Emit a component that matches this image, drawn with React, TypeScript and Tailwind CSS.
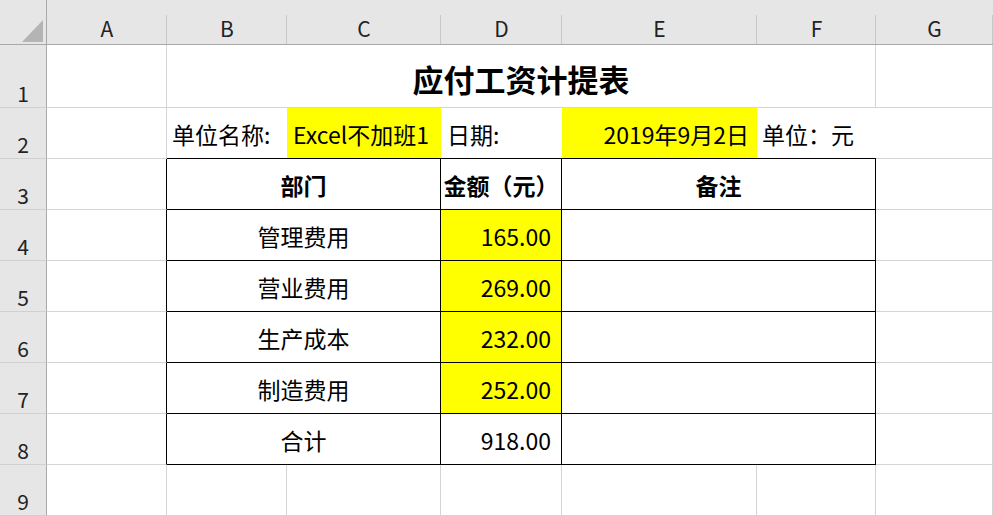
import React from "react"

const font = { fontFamily: '"Noto Sans CJK SC", "Noto Sans", sans-serif' }

const cols = ["A", "B", "C", "D", "E", "F", "G"]

const rows = [
  { dept: "管理费用", amount: "165.00", hl: true },
  { dept: "营业费用", amount: "269.00", hl: true },
  { dept: "生产成本", amount: "232.00", hl: true },
  { dept: "制造费用", amount: "252.00", hl: true },
  { dept: "合计", amount: "918.00", hl: false },
]

// light grid cell
const g = "border-r border-b border-[#d4d4d4]"

function RowHead({ n }: { n: number }) {
  return (
    <div className="flex items-end justify-center pb-[2px] bg-[#e6e6e6] border-r border-r-[#a9a9a9] border-b border-b-[#d0d0d0] text-[21px] leading-[24px] text-[#222]">
      {n}
    </div>
  )
}

export default function App() {
  return (
    <div
      className="grid w-[993px] h-[516px] overflow-hidden bg-white text-black text-[23px]"
      style={{
        ...font,
        gridTemplateColumns: "47px 120px 120px 154px 121px 195px 119px 117px",
        gridTemplateRows: "45px 63px repeat(8, 51px)",
      }}
    >
      {/* column headers */}
      <div className="relative bg-[#e6e6e6] border-r border-r-[#a9a9a9] border-b border-b-[#a9a9a9]">
        <svg className="absolute left-0 top-0" width="47" height="45">
          <polygon points="22,42 43,42 43,20" fill="#b4b4b4" />
        </svg>
      </div>
      {cols.map((c) => (
        <div
          key={c}
          className="flex items-end justify-center pb-[2px] bg-[#e6e6e6] border-b border-b-[#a9a9a9] relative text-[21px] leading-[28px] text-[#222]"
        >
          {c}
          <span className="absolute right-0 top-[15px] bottom-0 w-px bg-[#c8c8c8]" />
        </div>
      ))}

      {/* row 1 */}
      <RowHead n={1} />
      <div className={g} />
      <div className={`col-span-5 flex items-center justify-center pt-[7px] font-bold text-[31px] ${g}`}>
        应付工资计提表
      </div>
      <div className={g} />

      {/* row 2 */}
      <RowHead n={2} />
      <div className={g} />
      <div className="flex items-center pl-[5px] pt-[3px] whitespace-nowrap border-b border-black">单位名称:</div>
      <div className="flex items-center pl-[6px] pt-[3px] whitespace-nowrap bg-[#ffff00] border-b border-black">Excel不加班1</div>
      <div className="flex items-center pl-[6px] pt-[3px] whitespace-nowrap border-b border-black">日期:</div>
      <div className="flex items-center justify-end pr-[8px] pt-[3px] whitespace-nowrap bg-[#ffff00] border-b border-black">2019年9月2日</div>
      <div className="flex items-center pl-[5px] pt-[3px] whitespace-nowrap border-b border-black">单位：元</div>
      <div className={g} />

      {/* row 3: table header */}
      <RowHead n={3} />
      <div className="border-r border-black border-b border-b-[#d4d4d4]" />
      <div className="col-span-2 flex items-center justify-center pt-[2px] font-bold border-r border-b border-black">部门</div>
      <div className="flex items-center justify-center pt-[2px] font-bold whitespace-nowrap border-r border-b border-black">金额（元）</div>
      <div className="col-span-2 flex items-center justify-center pt-[2px] font-bold border-r border-b border-black">备注</div>
      <div className={g} />

      {/* rows 4-8 */}
      {rows.map((r, i) => (
        <React.Fragment key={r.dept}>
          <RowHead n={i + 4} />
          <div className="border-r border-black border-b border-b-[#d4d4d4]" />
          <div className="col-span-2 flex items-center justify-center pt-[3px] border-r border-b border-black">{r.dept}</div>
          <div
            className={`flex items-center justify-end pr-[10px] pt-[3px] border-r border-b border-black ${r.hl ? "bg-[#ffff00]" : ""}`}
          >
            {r.amount}
          </div>
          <div className="col-span-2 border-r border-b border-black" />
          <div className={g} />
        </React.Fragment>
      ))}

      {/* row 9 */}
      <RowHead n={9} />
      {cols.map((c) => (
        <div key={c} className={g} />
      ))}
    </div>
  )
}
